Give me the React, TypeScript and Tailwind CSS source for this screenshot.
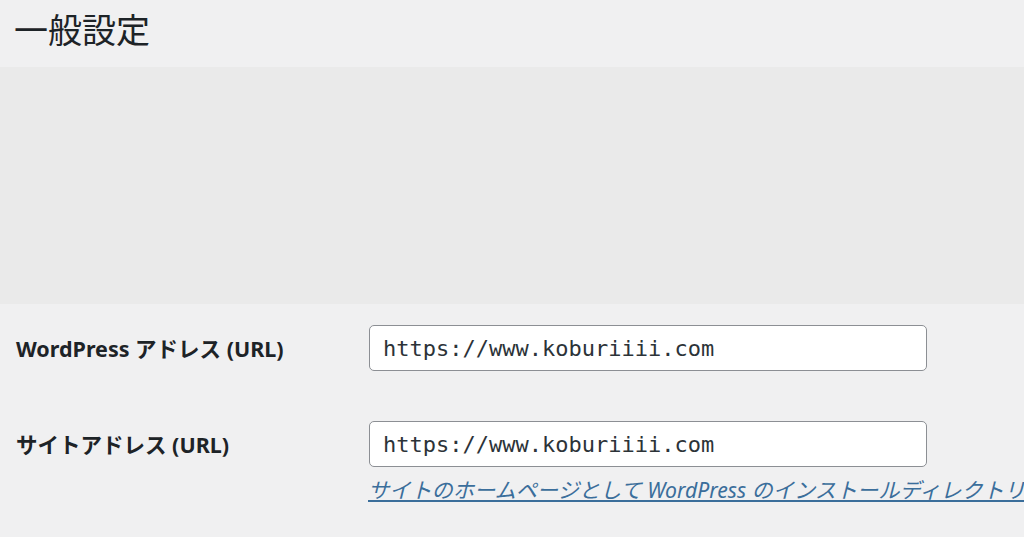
import React from "react";

const sans = "font-['Noto_Sans','Noto_Sans_CJK_JP',sans-serif]";
const mono = "font-['DejaVu_Sans_Mono','Liberation_Mono',monospace]";

function Row({ label, value, hint }: { label: string; value: string; hint?: string }) {
  return (
    <div className="flex items-start">
      <div className={`w-[353px] shrink-0 pl-4 pt-[8px] text-[21.5px] font-bold text-[#1d2327] ${sans}`}>{label}</div>
      <div className="flex flex-col">
        <div className={`w-[558px] h-[46px] ml-[16px] rounded-[5px] border border-[#8c8f94] bg-white pl-[13px] flex items-center text-[22px] text-[#2c3338] ${mono}`}>
          {value}
        </div>
        {hint && (
          <a className={`mt-[7px] ml-[15px] whitespace-nowrap italic underline text-[21.2px] text-[#3b6e9b] ${sans}`}>{hint}</a>
        )}
      </div>
    </div>
  );
}

export default function App() {
  return (
    <div className="w-[1024px] h-[537px] overflow-hidden bg-[#f0f0f1]">
      <div className="h-[67px] pl-[14px] pt-[8px]">
        <h1 className={`text-[34px] leading-[44px] text-[#1d2327] ${sans}`}>一般設定</h1>
      </div>
      <div className="h-[237px] bg-[#eaeaea]"></div>
      <div className="pt-[21px] flex flex-col gap-[50px]">
        <Row label="WordPress アドレス (URL)" value="https://www.koburiiii.com" />
        <Row
          label="サイトアドレス (URL)"
          value="https://www.koburiiii.com"
          hint="サイトのホームページとして WordPress のインストールディレクトリとは異なる場所を設定する場合は、ここにアドレスを入力してください。"
        />
      </div>
    </div>
  );
}
